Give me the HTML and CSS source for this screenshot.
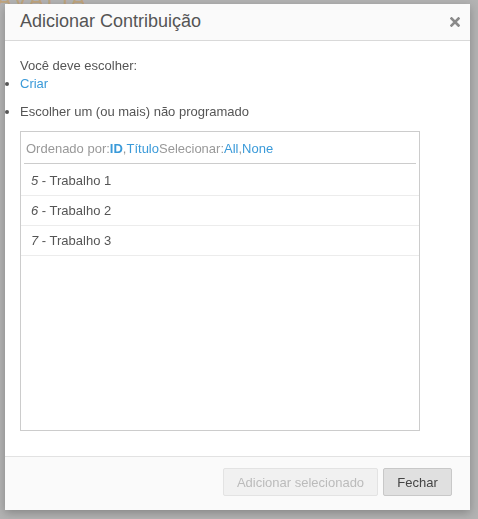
FILE: index.html
```html
<!DOCTYPE html>
<html lang="pt">
<head>
<meta charset="utf-8">
<title>Adicionar Contribuição</title>
<link rel="stylesheet" href="styles.css">
</head>
<body>
<div class="page">
  <div class="page-title">AVALIA</div>
</div>
<div class="backdrop">
  <div class="modal">
    <div class="modal-header">
      <h4 class="modal-title">Adicionar Contribuição</h4>
      <button class="close" type="button" aria-label="Fechar">
        <svg width="10" height="10" viewBox="0 0 10 10"><path d="M1.5 1.5 L8.5 8.5 M8.5 1.5 L1.5 8.5" stroke="#8a8a8a" stroke-width="2.6" stroke-linecap="square"/></svg>
      </button>
    </div>
    <div class="modal-body">
      <p class="lead-text">Você deve escolher:</p>
      <ul class="choices">
        <li class="choice"><a href="#" class="link">Criar</a></li>
        <li class="choice">
          <div>Escolher um (ou mais) não programado</div>
          <div class="picker">
            <div class="picker-head">Ordenado por:<a href="#" class="link strong">ID</a>,<a href="#" class="link">Título</a>Selecionar:<a href="#" class="link">All</a>,<a href="#" class="link">None</a></div>
            <div class="picker-list">
              <div class="row"><i>5</i> - Trabalho 1</div>
              <div class="row"><i>6</i> - Trabalho 2</div>
              <div class="row"><i>7</i> - Trabalho 3</div>
            </div>
          </div>
        </li>
      </ul>
    </div>
    <div class="modal-footer">
      <button class="btn btn-disabled" type="button" disabled>Adicionar selecionado</button>
      <button class="btn btn-default" type="button">Fechar</button>
    </div>
  </div>
</div>
</body>
</html>
```
FILE: styles.css
```css
html, body {
  margin: 0;
  padding: 0;
  height: 100%;
}
body {
  background: #b3b3b3;
  font-family: "Liberation Sans", Arial, sans-serif;
  font-size: 13px;
  color: #555;
  overflow: hidden;
}
.page-title {
  margin: -12px 0 0 -3px;
  font-size: 22px;
  line-height: 24px;
  letter-spacing: 3px;
  color: #c0a57e;
  font-weight: 300;
}
.backdrop {
  position: fixed;
  inset: 0;
}
.modal {
  position: absolute;
  left: 5px;
  top: 4px;
  width: 465px;
  height: 506px;
  background: #fff;
  box-shadow: 0 3px 9px rgba(0, 0, 0, 0.25);
  display: flex;
  flex-direction: column;
  box-sizing: border-box;
}
.modal-header {
  height: 36px;
  box-sizing: content-box;
  border-bottom: 1px solid #d9d9d9;
  background: #fafafa;
  display: flex;
  align-items: center;
  justify-content: space-between;
  padding: 0 10px 0 15px;
}
.modal-title {
  margin: 0 0 2px 0;
  font-size: 18px;
  font-weight: normal;
  color: #555;
  line-height: 20px;
}
.close {
  border: 0;
  background: transparent;
  padding: 0;
  width: 10px;
  height: 10px;
  margin-bottom: 1px;
  display: flex;
  align-items: center;
  justify-content: center;
}
.close svg { display: block; }
.modal-body {
  flex: 1;
  padding: 16px 15px 15px 15px;
  line-height: 18px;
}
.lead-text {
  margin: 0;
}
.choices {
  margin: 0;
  padding: 0;
  list-style: disc outside;
}
.choice {
  margin-bottom: 10px;
}
.link {
  color: #3a9ad9;
  text-decoration: none;
}
.strong {
  font-weight: bold;
}
.picker {
  margin-top: 10px;
  width: 400px;
  height: 300px;
  box-sizing: border-box;
  border: 1px solid #cccccc;
  padding: 0 3px;
}
.picker-head {
  height: 31px;
  line-height: 34px;
  border-bottom: 1px solid #cccccc;
  color: #999;
  padding-left: 2px;
}
.picker-list {
  margin: 0 -3px;
  padding-top: 2px;
}
.row {
  height: 29px;
  line-height: 30px;
  border-bottom: 1px solid #ececec;
  padding-left: 10px;
  color: #555;
}
.row i {
  font-style: italic;
}
.modal-footer {
  border-top: 1px solid #e2e2e2;
  background: #fafafa;
  height: 54px;
  box-sizing: border-box;
  padding: 11px 18px 0 0;
  display: flex;
  justify-content: flex-end;
  align-items: flex-start;
  gap: 5px;
}
.btn {
  height: 28px;
  box-sizing: border-box;
  font-family: "Liberation Sans", Arial, sans-serif;
  font-size: 13px;
  border-radius: 2px;
  padding: 0;
  white-space: nowrap;
}
.btn-disabled {
  width: 155px;
  background: #f1f1f1;
  border: 1px solid #e3e3e3;
  color: #bbbbbb;
}
.btn-default {
  width: 69px;
  background: #e0e0e0;
  border: 1px solid #c8c8c8;
  color: #444;
}
```
